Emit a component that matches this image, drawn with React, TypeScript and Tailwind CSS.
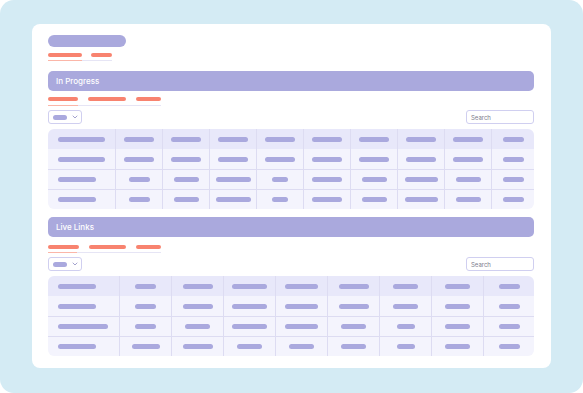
import React from "react";

const t1Cols = "grid-cols-[68px_repeat(8,47px)_42px]";
const t2Cols = "grid-cols-[72px_repeat(7,52px)_50px]";

const t1: number[][] = [
  [47, 30, 30, 30, 30, 30, 30, 30, 30, 21],
  [47, 30, 30, 30, 30, 30, 30, 30, 30, 21],
  [38, 21, 25, 35, 16, 30, 25, 33, 25, 21],
  [38, 21, 25, 35, 16, 30, 25, 33, 25, 21],
];

const t2: number[][] = [
  [38, 21, 30, 35, 33, 30, 25, 25, 21],
  [38, 21, 30, 35, 33, 30, 25, 25, 21],
  [50, 21, 25, 35, 33, 25, 18, 25, 21],
  [38, 28, 30, 25, 25, 25, 18, 25, 21],
];

function Table({ rows, cols }: { rows: number[][]; cols: string }) {
  return (
    <div className="rounded-[6px] overflow-hidden">
      {rows.map((r, ri) => (
        <div
          key={ri}
          className={`grid ${cols} h-[20px] ${ri === 0 ? "bg-[#e8e8fa]" : "bg-[#f4f4fd]"} ${ri >= 2 ? "border-t border-[#dddcf2]" : ""}`}
        >
          {r.map((w, ci) => (
            <div
              key={ci}
              className={`flex items-center ${ci === 0 ? "justify-start pl-[10px]" : "justify-center"} ${ci < r.length - 1 ? "border-r border-[#dddcf2]" : ""}`}
            >
              <div className="h-[5px] rounded-full bg-[#aaa9de]" style={{ width: w }} />
            </div>
          ))}
        </div>
      ))}
    </div>
  );
}

function Tabs({ widths, gaps, orange, total, lineGap }: { widths: number[]; gaps: number[]; orange: number; total: number; lineGap: number }) {
  return (
    <div className="flex flex-col" style={{ width: total }}>
      <div className="flex">
        {widths.map((w, i) => (
          <div key={i} className="h-[4px] rounded-full bg-[#f8836f]" style={{ width: w, marginLeft: i === 0 ? 0 : gaps[i - 1] }} />
        ))}
      </div>
      <div className="flex h-[1px]" style={{ marginTop: lineGap }}>
        <div className="h-[1px] bg-[#fbb6a8]" style={{ width: orange }} />
        <div className="h-[1px] flex-1 bg-[#e6e5f5]" />
      </div>
    </div>
  );
}

function Controls() {
  return (
    <div className="flex items-center justify-between">
      <div className="w-[34px] h-[14px] border border-[#d0cff0] rounded-[3px] flex items-center pl-[4px] gap-[4px] bg-white">
        <div className="w-[14px] h-[5px] rounded-full bg-[#aaa9de]" />
        <svg width="6" height="4" viewBox="0 0 6 4" className="ml-[1px]">
          <path d="M1 1 L3 3 L5 1" fill="none" stroke="#9a99c8" strokeWidth="0.9" strokeLinecap="round" strokeLinejoin="round" />
        </svg>
      </div>
      <div className="w-[68px] h-[14px] border border-[#d0cff0] rounded-[3px] flex items-center pl-[4px] bg-white">
        <span className="text-[6px] leading-[6px] text-[#7d7d8c] mt-[1px]" style={{ fontFamily: "Inter, 'Liberation Sans', sans-serif" }}>Search</span>
      </div>
    </div>
  );
}

function SectionBar({ label }: { label: string }) {
  return (
    <div className="h-[20px] rounded-[5px] bg-[#aaa9dd] flex items-center pl-[8px]">
      <span className="text-[8px] font-medium text-white leading-none" style={{ fontFamily: "Inter, 'Liberation Sans', sans-serif" }}>{label}</span>
    </div>
  );
}

export default function App() {
  return (
    <div className="w-[583px] h-[393px] bg-white">
      <div className="w-[583px] h-[393px] bg-[#d4ebf4] rounded-[14px] pt-[24px] pl-[32px]">
        <div className="w-[519px] h-[344px] bg-white rounded-[8px] pl-[16px] pr-[17px] pt-[11px] flex flex-col">
          <div className="w-[78px] h-[12px] rounded-full bg-[#aaa9dd]" />
          <div className="mt-[6px]">
            <Tabs widths={[34, 21]} gaps={[9]} orange={34} total={64} lineGap={3} />
          </div>
          <div className="mt-[10px]">
            <SectionBar label="In Progress" />
          </div>
          <div className="mt-[6px]">
            <Tabs widths={[30, 38, 25]} gaps={[10, 10]} orange={30} total={113} lineGap={4} />
          </div>
          <div className="mt-[4px]">
            <Controls />
          </div>
          <div className="mt-[5px]">
            <Table rows={t1} cols={t1Cols} />
          </div>
          <div className="mt-[8px]">
            <SectionBar label="Live Links" />
          </div>
          <div className="mt-[8px]">
            <Tabs widths={[31, 38, 25]} gaps={[10, 10]} orange={29} total={113} lineGap={3} />
          </div>
          <div className="mt-[4px]">
            <Controls />
          </div>
          <div className="mt-[5px]">
            <Table rows={t2} cols={t2Cols} />
          </div>
        </div>
      </div>
    </div>
  );
}
